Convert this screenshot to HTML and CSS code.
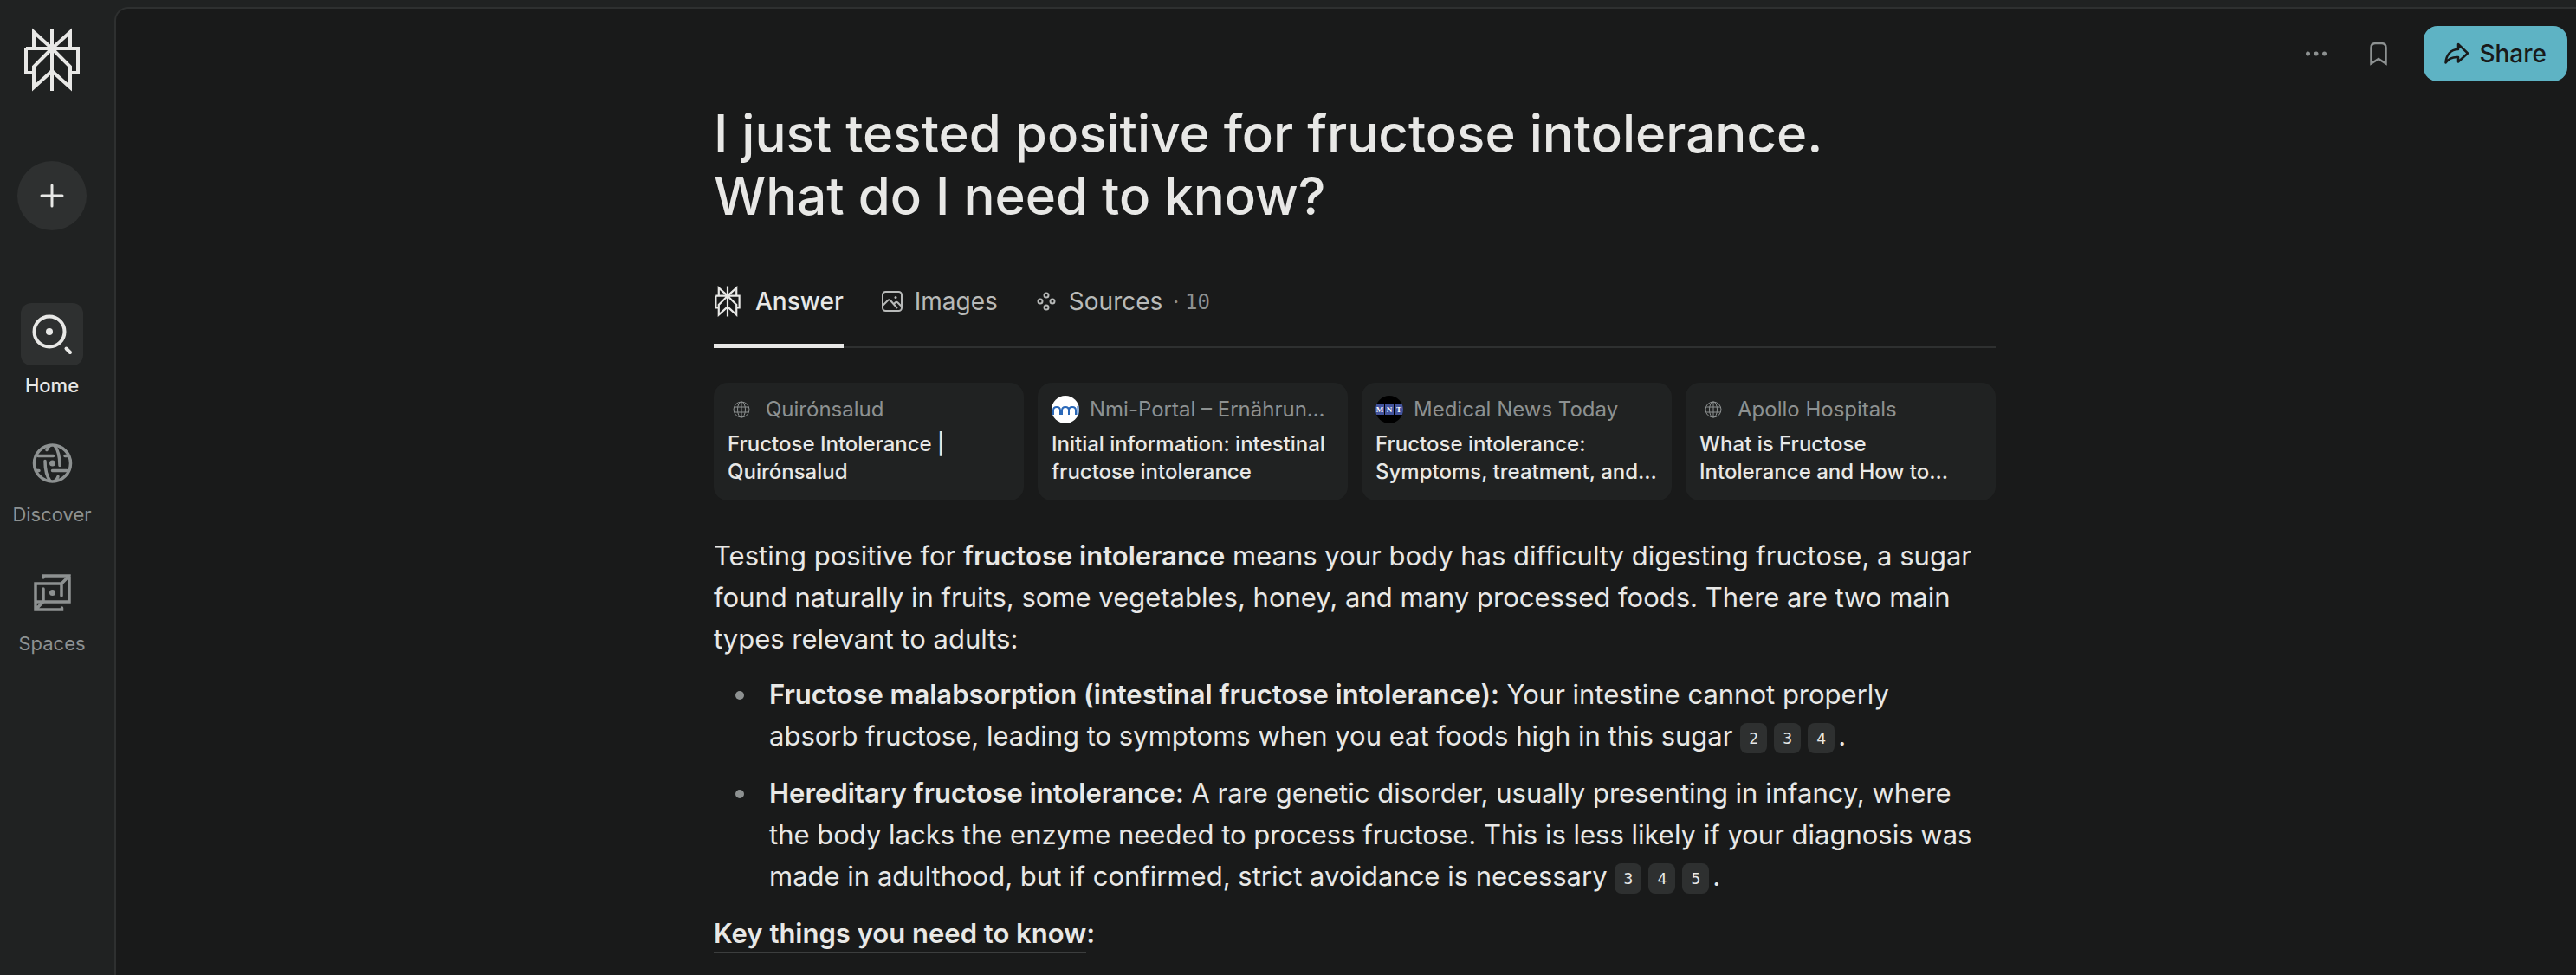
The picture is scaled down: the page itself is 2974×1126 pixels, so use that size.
FILE: index.html
```
<!DOCTYPE html>
<html lang="en">

<head>
    <meta charset="UTF-8">
    <meta name="viewport" content="width=device-width, initial-scale=1.0">
    <title>Fructose intolerance</title>
    <link rel="stylesheet" href="styles.css">
</head>

<body>
    <aside class="sidebar">
        <a class="logo" href="#" aria-label="Home page">
            <svg width="64" height="74" viewBox="0 0 64 74" fill="none" stroke="currentColor" stroke-width="4">
                <path d="M32 1v72M11 23V5l21 19L53 5v18M2 24h60v28h-9M11 52H2V24M32 24 11 45v24l21-19 21 19V45L32 24" />
            </svg>
        </a>
        <button class="newThread" type="button" aria-label="New thread">
            <svg width="28" height="28" viewBox="0 0 28 28" fill="none" stroke="currentColor" stroke-width="3" stroke-linecap="round">
                <path d="M14 2v24M2 14h24" />
            </svg>
        </button>
        <nav class="menu">
            <a class="menuItem active" href="#">
                <span class="menuIcon">
                    <svg width="48" height="48" viewBox="0 0 48 48" fill="none" stroke="currentColor" stroke-width="4" stroke-linecap="round">
                        <circle cx="21" cy="21" r="17.5" />
                        <circle cx="21" cy="21" r="4" fill="currentColor" stroke="none" />
                        <path d="m40.500 40.500 4.500 4.500" />
                    </svg>
                </span>
                Home
            </a>
            <a class="menuItem" href="#">
                <span class="menuIcon">
                    <svg width="48" height="48" viewBox="0 0 48 48" fill="none" stroke="currentColor" stroke-width="3.5" stroke-linecap="round">
                        <circle cx="24.5" cy="24" r="21" />
                        <circle cx="24.5" cy="24" r="3.5" fill="currentColor" stroke="none" />
                        <path d="M8 15.500h17.500M39 15.500h3M24.500 32.500H41M6 32.500h3M27 3.500c4 5 6 13 6 23M22 3.500c-2 1-3 2-4 5M16 21.500c0 11 2 18 6 23M27 44.500c2-1 3-2 4-5" />
                    </svg>
                </span>
                Discover
            </a>
            <a class="menuItem" href="#">
                <span class="menuIcon">
                    <svg width="48" height="48" viewBox="0 0 48 48" fill="none" stroke="currentColor" stroke-width="3.5" stroke-linecap="round">
                        <path d="M14 7V5h30v30H5M44 5 35 14M35 28V14H5v30h30.500v-2M5 44l9-9V20" />
                        <circle cx="24.5" cy="24.500" r="3.500" fill="currentColor" stroke="none" />
                    </svg>
                </span>
                Spaces
            </a>
        </nav>
    </aside>

    <main class="page">
        <header class="toolbar">
            <button class="iconButton" type="button" aria-label="More">
                <svg width="28" height="28" viewBox="0 0 28 28" fill="currentColor">
                    <circle cx="4.500" cy="14" r="2.500" />
                    <circle cx="14" cy="14" r="2.500" />
                    <circle cx="23.500" cy="14" r="2.500" />
                </svg>
            </button>
            <button class="iconButton" type="button" aria-label="Save">
                <svg width="28" height="28" viewBox="0 0 28 28" fill="none" stroke="currentColor" stroke-width="2.5">
                    <path d="M5.500 25.500V7q0-5 5-5h7q5 0 5 5v18.500l-8.500-5.500Z" />
                </svg>
            </button>
            <button class="share" type="button">
                <svg width="28" height="28" viewBox="0 0 28 28" fill="none" stroke="currentColor" stroke-width="2.500" stroke-linejoin="round">
                    <path d="M16 3v6C7 9 2 16 1.500 24.500 5 19.500 9 17.500 16 18v5.500L27 13.500Z" />
                </svg>
                Share
            </button>
        </header>

        <article class="thread">
            <h1>I just tested positive for fructose intolerance. What do I need to know?</h1>

            <nav class="tabs">
                <a class="tab active" href="#">
                    <svg width="32" height="36" viewBox="0 0 64 74" fill="none" stroke="currentColor" stroke-width="4.5">
                        <path d="M32 1v72M11 23V5l21 19L53 5v18M4 24h56v28h-7M11 52H4V24M32 24 11 45v24l21-19 21 19V45L32 24" />
                    </svg>
                    Answer
                </a>
                <a class="tab" href="#">
                    <svg width="28" height="28" viewBox="0 0 28 28" fill="none" stroke="currentColor" stroke-width="2">
                        <rect x="3" y="3" width="22" height="22" rx="3.5" />
                        <path d="m3 19 6-6q1.500-1.500 3 0l8 9M16 17l1.500-1.500q1.500-1.500 3 0L25 20" />
                        <circle cx="18" cy="9.500" r="1.500" fill="currentColor" stroke="none" />
                    </svg>
                    Images
                </a>
                <a class="tab" href="#">
                    <svg width="28" height="28" viewBox="0 0 28 28" fill="none" stroke="currentColor" stroke-width="2">
                        <circle cx="14" cy="7" r="2.500" />
                        <circle cx="7" cy="14" r="2.500" />
                        <circle cx="21" cy="14" r="2.500" />
                        <circle cx="14" cy="21" r="2.500" />
                    </svg>
                    Sources
                    <span class="count">· <span class="mono">10</span></span>
                </a>
            </nav>

            <div class="sources">
                <a class="card" href="#">
                    <span class="site">
                        <svg class="favicon" width="32" height="32" viewBox="0 0 32 32" fill="none" stroke="currentColor">
                            <circle cx="16" cy="16" r="9" />
                            <path d="M16 7v18M8 13h16M8 19h16" />
                            <ellipse cx="16" cy="16" rx="4.500" ry="9" />
                        </svg>
                        <span class="siteName">Quirónsalud</span>
                    </span>
                    <span class="cardTitle">Fructose Intolerance | Quirónsalud</span>
                </a>
                <a class="card" href="#">
                    <span class="site">
                        <svg class="favicon" width="32" height="32" viewBox="0 0 32 32">
                            <circle cx="16" cy="16" r="16" fill="#fff" />
                            <path d="M2 22v-5q0-4 4-4t4 4v5M12 22v-5q0-4 4-4t4 4v5M20 17q0-4 4-4t4 4v5M30.500 12v10" fill="none" stroke="#2a68b8" stroke-width="2" />
                        </svg>
                        <span class="siteName">Nmi-Portal – Ernährun…</span>
                    </span>
                    <span class="cardTitle">Initial information: intestinal fructose intolerance</span>
                </a>
                <a class="card" href="#">
                    <span class="site">
                        <span class="favicon mnt"><i>M</i><i>N</i><i>T</i></span>
                        <span class="siteName">Medical News Today</span>
                    </span>
                    <span class="cardTitle">Fructose intolerance: Symptoms, treatment, and...</span>
                </a>
                <a class="card" href="#">
                    <span class="site">
                        <svg class="favicon" width="32" height="32" viewBox="0 0 32 32" fill="none" stroke="currentColor">
                            <circle cx="16" cy="16" r="9" />
                            <path d="M16 7v18M8 13h16M8 19h16" />
                            <ellipse cx="16" cy="16" rx="4.500" ry="9" />
                        </svg>
                        <span class="siteName">Apollo Hospitals</span>
                    </span>
                    <span class="cardTitle">What is Fructose Intolerance and How to...</span>
                </a>
            </div>

            <div class="answer">
                <p>Testing positive for <strong>fructose intolerance</strong> means your body has difficulty digesting fructose, a sugar found naturally in fruits, some vegetables, honey, and many processed foods. There are two main types relevant to adults:</p>
                <ul>
                    <li><strong>Fructose malabsorption (intestinal fructose intolerance):</strong> Your intestine cannot properly<br>absorb fructose, leading to symptoms when you eat foods high in this sugar <a class="cite" href="#">2</a><a class="cite" href="#">3</a><a class="cite" href="#">4</a>.</li>
                    <li><strong>Hereditary fructose intolerance:</strong> A rare genetic disorder, usually presenting in infancy, where<br>the body lacks the enzyme needed to process fructose. This is less likely if your diagnosis was made in adulthood, but if confirmed, strict avoidance is necessary <a class="cite" href="#">3</a><a class="cite" href="#">4</a><a class="cite" href="#">5</a>.</li>
                </ul>
                <h2><span class="underlined">Key things you need to know</span>:</h2>
            </div>
        </article>
    </main>
</body>

</html>
```
FILE: styles.css
```
* {
    box-sizing: border-box;
}

body {
    display: flex;
    min-height: 100vh;
    margin: 0;
    padding-top: 8px;
    background-color: #202222;
    color: #e8e8e6;
    font-family: Inter, "Liberation Sans", sans-serif;
}

a {
    color: inherit;
    text-decoration: none;
}

svg {
    display: block;
    flex: none;
}

button {
    display: flex;
    align-items: center;
    justify-content: center;
    padding: 0;
    border: none;
    background: none;
    color: inherit;
    font-family: inherit;
    cursor: pointer;
}

.sidebar {
    display: flex;
    flex-direction: column;
    align-items: center;
    flex: none;
    width: 132px;
    padding: 24px 12px 0 0;
}

.newThread {
    width: 80px;
    height: 80px;
    margin-top: 80px;
    border-radius: 50%;
    background-color: #2e3030;
}

.menu {
    display: flex;
    flex-direction: column;
    gap: 38px;
    margin-top: 84px;
}

.menuItem {
    display: flex;
    flex-direction: column;
    align-items: center;
    gap: 7px;
    color: #8d9191;
    font-size: 22px;
    line-height: 32px;
}

.menuItem.active {
    color: #e8e8e6;
    font-weight: 500;
}

.menuIcon {
    display: flex;
    align-items: center;
    justify-content: center;
    width: 72px;
    height: 72px;
    border-radius: 12px;
}

.active .menuIcon {
    background-color: #2e3030;
}

.page {
    flex: 1;
    min-width: 0;
    padding-left: 20px;
    border: solid #2e3030;
    border-width: 2px 0 0 2px;
    border-top-left-radius: 16px;
    background-color: #191a1a;
}

.toolbar {
    display: flex;
    justify-content: flex-end;
    padding: 20px 10px 0 0;
}

.iconButton {
    width: 72px;
    color: #8d9191;
}

.share {
    gap: 12px;
    height: 64px;
    margin-left: 16px;
    padding: 0 24px;
    border-radius: 16px;
    background-color: #5eb3c4;
    color: #191a1a;
    font-size: 28px;
    font-weight: 500;
}

.thread {
    max-width: 1480px;
    margin: 0 auto;
    padding-top: 24px;
}

h1 {
    max-width: 1360px;
    margin: 0;
    font-size: 60px;
    font-weight: 500;
    line-height: 72px;
}

.tabs {
    display: flex;
    gap: 42px;
    height: 108px;
    margin-top: 32px;
    border-bottom: 2px solid #2e3030;
}

.tab {
    display: flex;
    align-items: center;
    gap: 12px;
    padding-top: 2px;
    color: #b8bab9;
    font-size: 28px;
}

.tab.active {
    gap: 16px;
    margin-bottom: -2px;
    padding-top: 4px;
    border-bottom: 5px solid #e8e8e6;
    color: #e8e8e6;
    font-weight: 500;
}

.count {
    color: #8d9191;
    font-size: 24px;
}

.mono {
    font-family: "DejaVu Sans Mono", monospace;
}

.sources {
    display: grid;
    grid-template-columns: repeat(4, 1fr);
    gap: 16px;
    margin-top: 40px;
}

.card {
    min-width: 0;
    height: 136px;
    padding: 15px 16px;
    border-radius: 16px;
    background-color: #202222;
}

.site {
    display: flex;
    align-items: center;
    gap: 12px;
    color: #8d9191;
    font-size: 24px;
    line-height: 32px;
}

.favicon {
    flex: none;
}

.siteName {
    white-space: nowrap;
}

.mnt {
    display: flex;
    align-items: center;
    justify-content: space-between;
    width: 32px;
    height: 32px;
    overflow: hidden;
    border-radius: 50%;
    background-color: #000;
    color: #fff;
}

.mnt i {
    width: 10px;
    background-color: #43549c;
    font: bold 9px/12px "Liberation Serif", serif;
    text-align: center;
}

.cardTitle {
    display: block;
    margin-top: 8px;
    font-size: 24px;
    font-weight: 500;
    line-height: 32px;
}

.answer {
    margin-top: 40px;
    font-size: 31px;
    line-height: 48px;
}

.answer p {
    margin: 0;
}

.answer ul {
    margin: 16px 0 0;
    padding-left: 64px;
    list-style: none;
}

.answer li {
    margin-bottom: 18px;
}

.answer li::before {
    content: "";
    display: inline-block;
    width: 10px;
    height: 10px;
    margin: 0 29px 4px -39px;
    border-radius: 50%;
    background-color: #8d9191;
    vertical-align: middle;
}

strong {
    font-weight: 600;
}

.cite {
    display: inline-block;
    width: 31px;
    height: 35px;
    margin-right: 8px;
    border-radius: 8px;
    background-color: #2e3030;
    font-family: "DejaVu Sans Mono", monospace;
    font-size: 18px;
    line-height: 35px;
    text-align: center;
    vertical-align: middle;
}

.cite:last-child {
    margin-right: 4px;
}

h2 {
    margin: 0;
    font-size: 31px;
    font-weight: 600;
    line-height: 48px;
}

.underlined {
    padding-bottom: 3px;
    border-bottom: 2px solid #3c3e3e;
}
```
